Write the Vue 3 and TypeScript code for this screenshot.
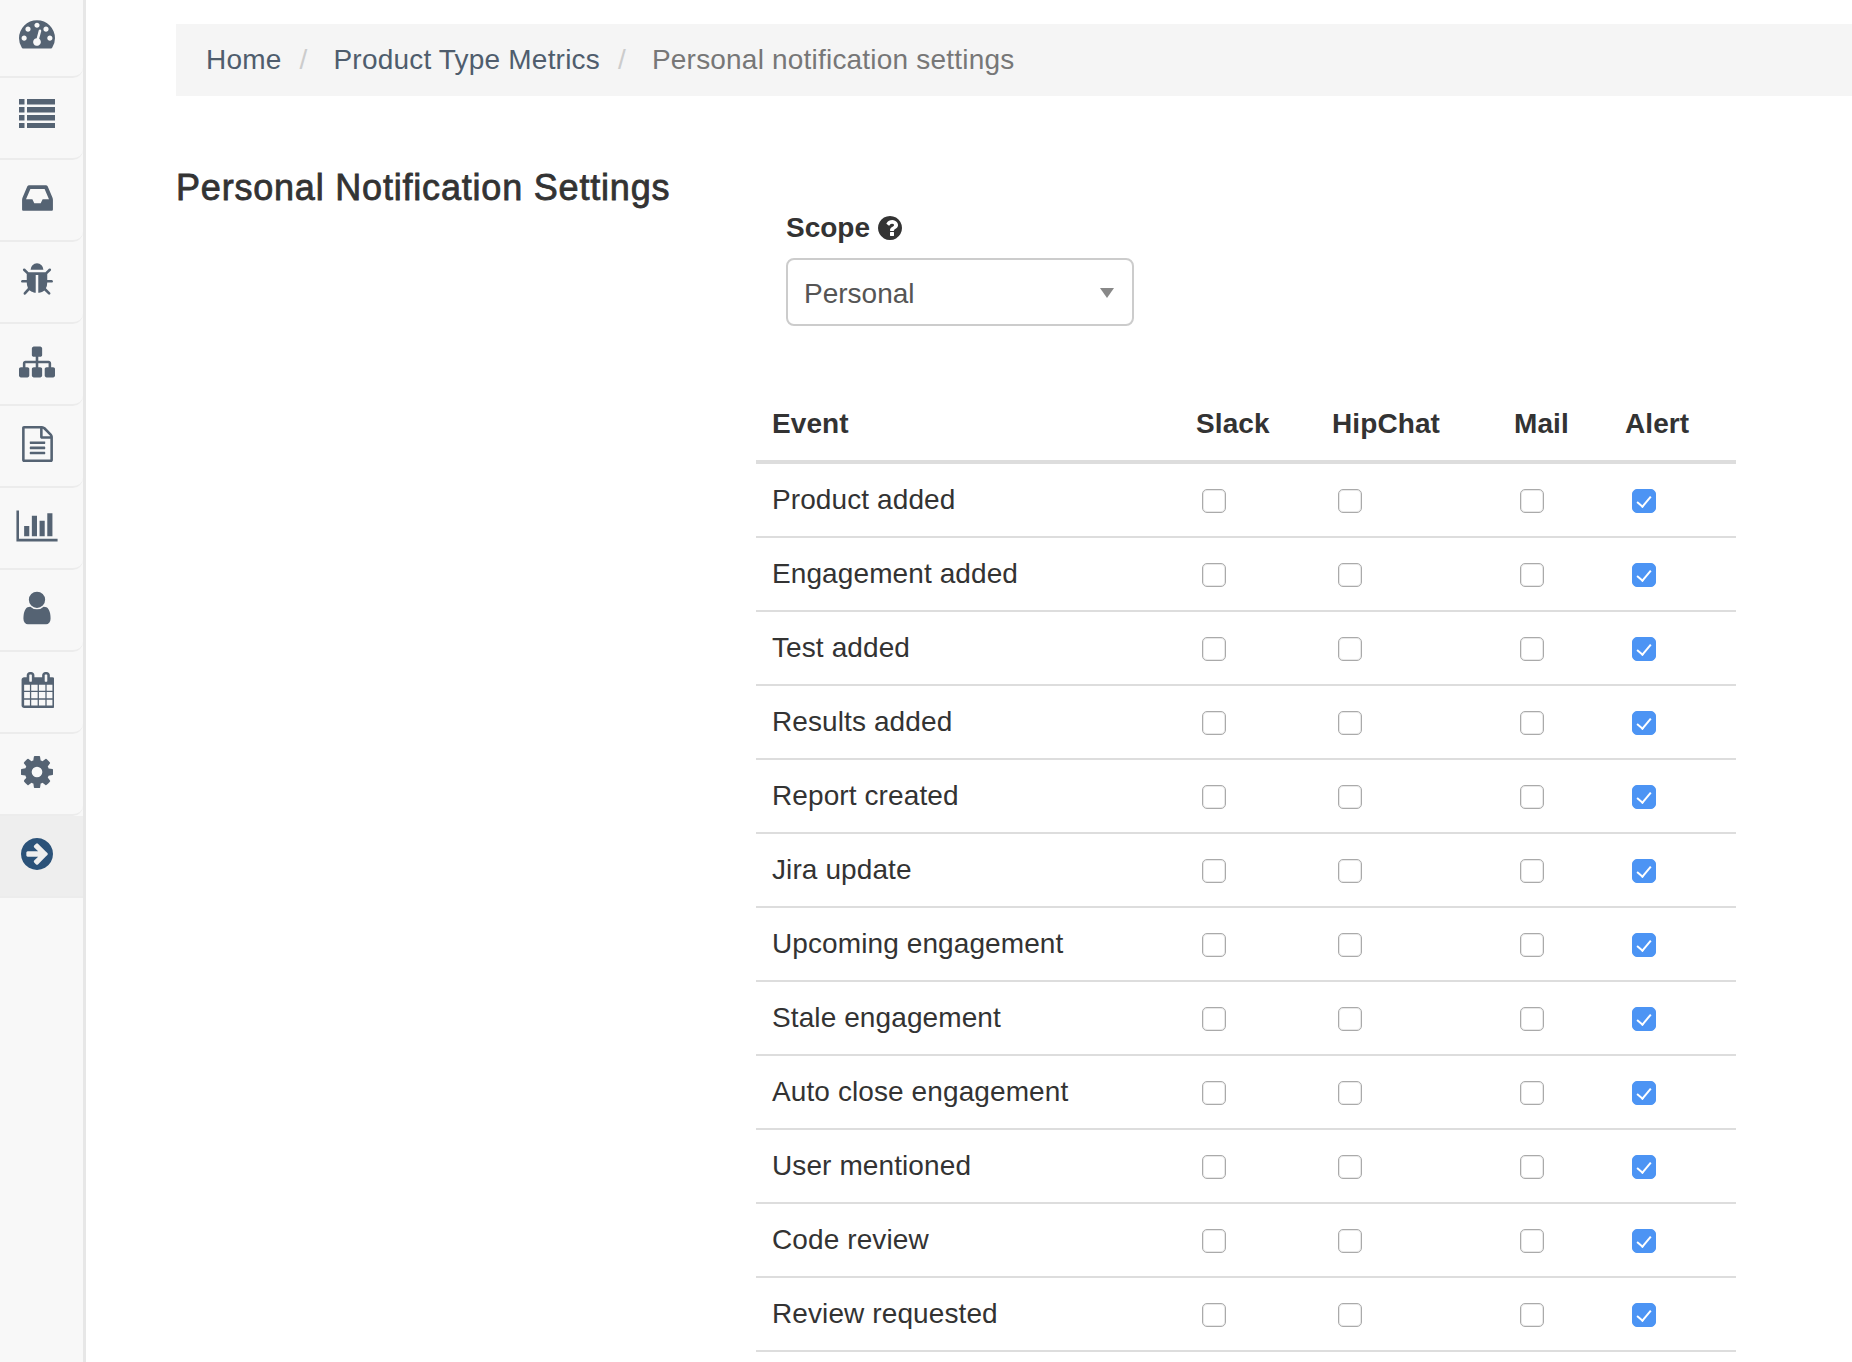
<script setup lang="ts">
interface NavItem { box: string; w: number; h: number; d: string; active?: boolean }

const list = [0, 1, 2, 3]
  .map((i) => `M0 ${i * 8}h5.5v5.5h-5.5z M8 ${i * 8}h28v5.5h-28z`)
  .join(' ')

const nav: NavItem[] = [
  { box: '0 0 1792 1792', w: 36, h: 36, d: 'M384 1152q0-53-37.5-90.5t-90.5-37.5-90.5 37.5-37.5 90.5 37.5 90.5 90.5 37.5 90.5-37.5 37.5-90.5zm192-448q0-53-37.5-90.5t-90.5-37.5-90.5 37.5-37.5 90.5 37.5 90.5 90.5 37.5 90.5-37.5 37.5-90.5zm428 481l101-382q6-26-7.5-48.5t-38.5-29.5-48 6.5-30 39.5l-101 382q-60 5-107 43.5t-63 98.5q-20 77 20 146t117 89 146-20 89-117q16-60-6-117t-72-91zm660-33q0-53-37.5-90.5t-90.5-37.5-90.5 37.5-37.5 90.5 37.5 90.5 90.5 37.5 90.5-37.5 37.5-90.5zm-640-640q0-53-37.5-90.5t-90.5-37.5-90.5 37.5-37.5 90.5 37.5 90.5 90.5 37.5 90.5-37.5 37.5-90.5zm448 192q0-53-37.5-90.5t-90.5-37.5-90.5 37.5-37.5 90.5 37.5 90.5 90.5 37.5 90.5-37.5 37.5-90.5zm320 448q0 261-141 483-19 29-54 29h-1402q-35 0-54-29-141-221-141-483 0-182 71-348t191-286 286-191 348-71 348 71 286 191 191 286 71 348z' },
  { box: '0 0 36 29.5', w: 36, h: 29.5, d: list },
  { box: '0 0 1536 1792', w: 31, h: 36, d: 'M1023 960h316q-1-3-2.5-8.5t-2.5-7.5l-212-496h-708l-212 496q-1 3-2.5 8.5t-2.5 7.5h316l95 192h320zm513 30v482q0 26-19 45t-45 19h-1408q-26 0-45-19t-19-45v-482q0-62 25-123l238-552q10-25 36.5-42t52.5-17h832q26 0 52.5 17t36.5 42l238 552q25 61 25 123z' },
  { box: '96 0 1600 1792', w: 32, h: 36, d: 'M1696 960q0 26-19 45t-45 19h-224q0 171-67 290l208 209q19 19 19 45t-19 45q-18 19-45 19t-45-19l-198-197q-5 5-15 13t-42 28.5-65 36.5-82 29-97 13v-896h-128v896q-51 0-101.5-13.5t-87-33-66-39-43.5-32.5l-15-14-183 207q-20 21-48 21-24 0-43-16-19-18-20.5-44.5t15.5-46.5l202-227q-58-114-58-274h-224q-26 0-45-19t-19-45 19-45 45-19h224v-294l-173-173q-19-19-19-45t19-45 45-19 45 19l173 173h844l173-173q19-19 45-19t45 19 19 45-19 45l-173 173v294h224q26 0 45 19t19 45zm-480-576h-640q0-133 93.5-226.5t226.5-93.5 226.5 93.5 93.5 226.5z' },
  { box: '0 0 1792 1792', w: 36, h: 36, d: 'M1792 1248v320q0 40-28 68t-68 28h-320q-40 0-68-28t-28-68v-320q0-40 28-68t68-28h96v-192h-512v192h96q40 0 68 28t28 68v320q0 40-28 68t-68 28h-320q-40 0-68-28t-28-68v-320q0-40 28-68t68-28h96v-192h-512v192h96q40 0 68 28t28 68v320q0 40-28 68t-68 28h-320q-40 0-68-28t-28-68v-320q0-40 28-68t68-28h96v-192q0-52 38-90t90-38h512v-192h-96q-40 0-68-28t-28-68v-320q0-40 28-68t68-28h320q40 0 68 28t28 68v320q0 40-28 68t-68 28h-96v192h512q52 0 90 38t38 90v192h96q40 0 68 28t28 68z' },
  { box: '128 0 1536 1792', w: 31, h: 36, d: 'M1596 380q28 28 48 76t20 88v1152q0 40-28 68t-68 28h-1344q-40 0-68-28t-28-68v-1600q0-40 28-68t68-28h896q40 0 88 20t76 48zm-444-244v376h376q-10-29-22-41l-313-313q-12-12-41-22zm384 1528v-1024h-416q-40 0-68-28t-28-68v-416h-768v1536h1280zm-1024-864q0-14 9-23t23-9h704q14 0 23 9t9 23v64q0 14-9 23t-23 9h-704q-14 0-23-9t-9-23v-64zm736 224q14 0 23 9t9 23v64q0 14-9 23t-23 9h-704q-14 0-23-9t-9-23v-64q0-14 9-23t23-9h704zm0 256q14 0 23 9t9 23v64q0 14-9 23t-23 9h-704q-14 0-23-9t-9-23v-64q0-14 9-23t23-9h704z' },
  { box: '0 0 2048 1792', w: 42, h: 36, d: 'M640 896v512h-256v-512h256zm384-512v1024h-256v-1024h256zm1024 1152v128h-2048v-1536h128v1408h1920zm-640-896v768h-256v-768h256zm384-384v1152h-256v-1152h256z' },
  { box: '256 0 1280 1792', w: 28, h: 38, d: 'M1536 1399q0 109-62.5 187t-150.5 78h-854q-88 0-150.5-78t-62.5-187q0-85 8.5-160.5t31.5-152 58.5-131 94-89 134.5-34.5q131 128 313 128t313-128q76 0 134.5 34.5t94 89 58.5 131 31.5 152 8.5 160.5zm-256-887q0 159-112.5 271.5t-271.5 112.5-271.5-112.5-112.5-271.5 112.5-271.5 271.5-112.5 271.5 112.5 112.5 271.5z' },
  { box: '0 0 1664 1792', w: 34, h: 36, d: 'M192 1664h288v-288h-288v288zm352 0h320v-288h-320v288zm-352-352h288v-320h-288v320zm352 0h320v-320h-320v320zm-352-384h288v-288h-288v288zm736 736h320v-288h-320v288zm-384-736h320v-288h-320v288zm768 736h288v-288h-288v288zm-384-352h320v-320h-320v320zm-352-864v-288q0-13-9.5-22.5t-22.5-9.5h-64q-13 0-22.5 9.5t-9.5 22.5v288q0 13 9.5 22.5t22.5 9.5h64q13 0 22.5-9.5t9.5-22.5zm736 864h288v-320h-288v320zm-384-384h320v-288h-320v288zm384 0h288v-288h-288v288zm32-480v-288q0-13-9.5-22.5t-22.5-9.5h-64q-13 0-22.5 9.5t-9.5 22.5v288q0 13 9.5 22.5t22.5 9.5h64q13 0 22.5-9.5t9.5-22.5zm384-64v1280q0 52-38 90t-90 38h-1408q-52 0-90-38t-38-90v-1280q0-52 38-90t90-38h128v-96q0-66 47-113t113-47h64q66 0 113 47t47 113v96h384v-96q0-66 47-113t113-47h64q66 0 113 47t47 113v96h128q52 0 90 38t38 90z' },
  { box: '128 128 1536 1536', w: 32, h: 32, d: 'M1152 896q0-106-75-181t-181-75-181 75-75 181 75 181 181 75 181-75 75-181zm512-109v222q0 12-8 23t-20 13l-185 28q-19 54-39 91 35 50 107 138 10 12 10 25t-9 23q-27 37-99 108t-94 71q-12 0-26-9l-138-108q-44 23-91 38-16 136-29 186-7 28-36 28h-222q-14 0-24.5-8.5t-11.5-21.5l-28-184q-49-16-90-37l-141 107q-10 9-25 9-14 0-25-11-126-114-165-168-7-10-7-23 0-12 8-23 15-21 51-66.5t54-70.5q-27-50-41-99l-183-27q-13-2-21-12.5t-8-23.5v-222q0-12 8-23t19-13l186-28q14-46 39-92-40-57-107-138-10-12-10-24 0-10 9-23 26-36 98.5-107.5t94.5-71.5q13 0 26 10l138 107q44-23 91-38 16-136 29-186 7-28 36-28h222q14 0 24.5 8.5t11.5 21.5l28 184q49 16 90 37l142-107q9-9 24-9 13 0 25 10 129 119 165 170 7 8 7 22 0 12-8 23-15 21-51 66.5t-54 70.5q26 50 41 98l183 28q13 2 21 12.5t8 23.5z' },
  { box: '0 128 1536 1536', w: 32, h: 32, active: true, d: 'M1285 896q0-27-18-45l-91-91-362-362q-18-18-45-18t-45 18l-91 91q-18 18-18 45t18 45l189 189h-502q-26 0-45 19t-19 45v128q0 26 19 45t45 19h502l-189 189q-19 19-19 45t19 45l91 91q18 18 45 18t45-18l362-362 91-91q18-18 18-45zm251 0q0 209-103 385.5t-279.5 279.5-385.5 103-385.5-103-279.5-279.5-103-385.5 103-385.5 279.5-279.5 385.5-103 385.5 103 279.5 279.5 103 385.5z' },
]

const events = [
  'Product added',
  'Engagement added',
  'Test added',
  'Results added',
  'Report created',
  'Jira update',
  'Upcoming engagement',
  'Stale engagement',
  'Auto close engagement',
  'User mentioned',
  'Code review',
  'Review requested',
]
</script>

<template>
  <div class="page">
    <aside class="sidebar">
      <a v-for="(item, i) in nav" :key="i" class="nav-item" :class="{ active: item.active }">
        <svg :viewBox="item.box" :width="item.w" :height="item.h" fill="currentColor"><path :d="item.d" /></svg>
      </a>
    </aside>

    <main class="main">
      <ol class="breadcrumb">
        <li><a>Home</a></li>
        <li class="sep">/</li>
        <li><a>Product Type Metrics</a></li>
        <li class="sep">/</li>
        <li class="current">Personal notification settings</li>
      </ol>

      <h1 class="title">Personal Notification Settings</h1>

      <form class="settings">
        <div class="field">
          <label class="field-label">
            Scope
            <svg class="help" viewBox="0 128 1536 1536" width="24" height="24" fill="currentColor"><path d="M1024 1376v-192q0-14-9-23t-23-9h-192q-14 0-23 9t-9 23v192q0 14 9 23t23 9h192q14 0 23-9t9-23zm256-672q0-88-55.5-163t-138.5-116-170-41q-243 0-371 213-15 24 8 42l132 100q7 6 19 6 16 0 25-12 53-68 86-92 34-24 86-24 48 0 85.5 26t37.5 59q0 38-20 61t-68 45q-63 28-115.5 86.5t-52.5 125.5v36q0 14 9 23t23 9h192q14 0 23-9t9-23q0-19 21.5-49.5t54.5-49.5q32-18 49-28.5t46-35 44.5-48 28-60.5 12.5-81zm256 192q0 209-103 385.5t-279.5 279.5-385.5 103-385.5-103-279.5-279.5-103-385.5 103-385.5 279.5-279.5 385.5-103 385.5 103 279.5 279.5 103 385.5z" /></svg>
          </label>
          <div class="select-wrap">
            <select class="select"><option>Personal</option></select>
          </div>
        </div>

        <table class="events">
          <colgroup>
            <col class="c-event" /><col class="c-slack" /><col class="c-hipchat" /><col class="c-mail" /><col class="c-alert" />
          </colgroup>
          <thead>
            <tr>
              <th>Event</th>
              <th>Slack</th>
              <th>HipChat</th>
              <th>Mail</th>
              <th>Alert</th>
            </tr>
          </thead>
          <tbody>
            <tr v-for="ev in events" :key="ev">
              <td>{{ ev }}</td>
              <td><input type="checkbox" class="check" /></td>
              <td><input type="checkbox" class="check" /></td>
              <td><input type="checkbox" class="check" /></td>
              <td><input type="checkbox" class="check" checked /></td>
            </tr>
          </tbody>
        </table>
      </form>
    </main>
  </div>
</template>

<style>
html, body { margin: 0; overflow: hidden; background: #fff; }
</style>

<style scoped>
.page {
  display: flex;
  height: 1362px;
  overflow: hidden;
  font-family: "Liberation Sans", Arial, sans-serif;
  font-size: 28px;
  color: #333;
}

.sidebar {
  width: 83px;
  flex: none;
  display: flex;
  flex-direction: column;
  background: #f8f8f8;
  border-right: 3px solid #e7e7e7;
}

.nav-item {
  height: 75px;
  flex: none;
  display: flex;
  align-items: center;
  justify-content: center;
  padding-right: 9px;
  padding-bottom: 5px;
  border-bottom: 2px solid #ececec;
  border-bottom-right-radius: 10px;
  color: #556373;
}

.nav-item:first-child { height: 66px; padding-bottom: 10px; }
.nav-item:nth-child(2) { height: 71px; padding-bottom: 9px; }
.nav-item.active { background: #eee; color: #2b5279; border-bottom-right-radius: 0; }

.main {
  flex: 1;
  min-width: 0;
  padding: 24px 0 0 90px;
}

.breadcrumb {
  display: flex;
  align-items: center;
  height: 72px;
  margin: 0;
  padding: 0 30px;
  list-style: none;
  background: #f5f5f5;
  line-height: 40px;
  letter-spacing: 0.2px;
}

.breadcrumb a { color: #4f5d6d; }
.breadcrumb .sep { color: #ccc; padding: 0 26px 0 18px; }
.breadcrumb .current { color: #777; }

.title {
  margin: 72px 0 0;
  font-size: 36px;
  line-height: 40px;
  font-weight: 400;
  letter-spacing: 0.8px;
  -webkit-text-stroke: 0.8px #333;
  color: #333;
}

.settings {
  margin: 0 0 0 580px;
  width: 980px;
}

.field { padding-left: 30px; }

.field-label {
  display: flex;
  align-items: center;
  gap: 8px;
  font-weight: 700;
  line-height: 40px;
  margin-bottom: 10px;
}

.help { color: #333; }

.select-wrap {
  position: relative;
  width: 348px;
}

.select-wrap::after {
  content: "";
  position: absolute;
  right: 20px;
  top: 30px;
  border-left: 7px solid transparent;
  border-right: 7px solid transparent;
  border-top: 10px solid #888;
}

.select {
  display: block;
  width: 100%;
  height: 68px;
  box-sizing: border-box;
  padding: 2px 16px 0;
  appearance: none;
  background: #fff;
  border: 2px solid #ccc;
  border-radius: 8px;
  font: inherit;
  color: #555;
}

.events {
  width: 980px;
  margin-top: 62px;
  table-layout: fixed;
  border-collapse: separate;
  border-spacing: 0;
  letter-spacing: 0.1px;
}

.c-event { width: 424px; }
.c-slack { width: 136px; }
.c-hipchat { width: 182px; }
.c-mail { width: 111px; }
.c-alert { width: 127px; }

.events th {
  height: 72px;
  padding: 0 0 0 16px;
  text-align: left;
  font-weight: 700;
  border-bottom: 4px solid #ddd;
}

.events td {
  height: 72px;
  padding: 0 0 0 16px;
  border-bottom: 2px solid #ddd;
}

.check {
  appearance: none;
  display: block;
  position: relative;
  width: 24px;
  height: 24px;
  box-sizing: border-box;
  margin: 1px 0 0 6px;
  background: #fff;
  border: 1px solid #aaa;
  border-radius: 5px;
  box-shadow: inset 0 0 0 1px #e8e8e8;
}

.events td:last-child .check { margin-left: 7px; }

.check:checked {
  background: #4c94f4;
  border-color: #4c94f4;
  box-shadow: none;
}

.check:checked::after {
  content: "";
  position: absolute;
  left: 7px;
  top: 3px;
  width: 6px;
  height: 12px;
  border: solid #fff;
  border-width: 0 2px 2px 0;
  transform: rotate(40deg);
}
</style>
